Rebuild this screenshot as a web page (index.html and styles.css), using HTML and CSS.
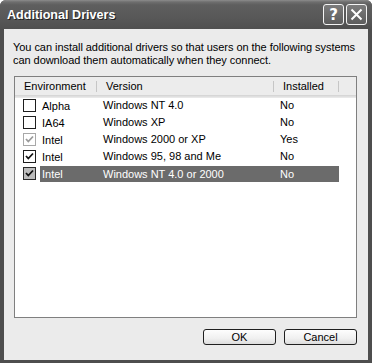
FILE: index.html
```html
<!DOCTYPE html>
<html>
<head>
<meta charset="utf-8">
<link rel="stylesheet" href="styles.css">
</head>
<body>
<div class="window">
  <div class="titlebar">
    <span class="title">Additional Drivers</span>
    <div class="tbuttons">
      <span class="tbtn help">?</span>
      <span class="tbtn close"><svg width="13" height="13" viewBox="0 0 13 13"><path d="M1.5 1.5 L11.5 11.5 M11.5 1.5 L1.5 11.5" stroke="#fff" stroke-width="2" fill="none"/></svg></span>
    </div>
  </div>
  <div class="client">
    <p class="desc">You can install additional drivers so that users on the following systems<br>can download them automatically when they connect.</p>
    <div class="listbox">
      <div class="header">
        <div class="hcell">Environment</div>
        <div class="hcell">Version</div>
        <div class="hcell">Installed</div>
        <div class="hcell last"></div>
      </div>
      <div class="rows">
        <div class="row">
          <div class="cell env"><span class="cb"></span><span class="lbl">Alpha</span></div>
          <div class="cell">Windows NT 4.0</div>
          <div class="cell">No</div>
        </div>
        <div class="row">
          <div class="cell env"><span class="cb"></span><span class="lbl">IA64</span></div>
          <div class="cell">Windows XP</div>
          <div class="cell">No</div>
        </div>
        <div class="row">
          <div class="cell env"><span class="cb disabled"><svg width="11" height="11" viewBox="0 0 11 11"><path d="M2 5 L4.3 7.5 L9 2.5" stroke="#9a9a9a" stroke-width="1.8" fill="none"/></svg></span><span class="lbl">Intel</span></div>
          <div class="cell">Windows 2000 or XP</div>
          <div class="cell">Yes</div>
        </div>
        <div class="row">
          <div class="cell env"><span class="cb"><svg width="11" height="11" viewBox="0 0 11 11"><path d="M2 5 L4.3 7.5 L9 2.5" stroke="#111" stroke-width="1.8" fill="none"/></svg></span><span class="lbl">Intel</span></div>
          <div class="cell">Windows 95, 98 and Me</div>
          <div class="cell">No</div>
        </div>
        <div class="row selected">
          <div class="cell env"><span class="cb sel"><svg width="11" height="11" viewBox="0 0 11 11"><path d="M2 5 L4.3 7.5 L9 2.5" stroke="#111" stroke-width="1.8" fill="none"/></svg></span><span class="lbl hl">Intel</span></div>
          <div class="cell hl">Windows NT 4.0 or 2000</div>
          <div class="cell hl">No</div>
        </div>
      </div>
    </div>
    <div class="buttons">
      <button class="btn">OK</button>
      <button class="btn">Cancel</button>
    </div>
  </div>
</div>
</body>
</html>
```

FILE: styles.css
```css
html, body {
  margin: 0;
  padding: 0;
  background: #fff;
}
.window {
  width: 372px;
  height: 363px;
  box-sizing: border-box;
  background: #4e4e4e;
  display: flex;
  flex-direction: column;
  border-radius: 6px 6px 0 0;
  overflow: hidden;
}
.titlebar {
  height: 29px;
  flex: none;
  display: flex;
  align-items: center;
  justify-content: space-between;
  padding: 0 5px 0 7px;
  background: linear-gradient(#8c8c8c 0, #6e6e6e 2px, #5e5e5e 5px, #585858 60%, #4f4f4f 100%);
}
.title {
  font-family: "Liberation Sans", Arial, sans-serif;
  font-weight: bold;
  font-size: 12.6px;
  color: #fff;
  text-shadow: 1px 1px 0 #222;
  padding-top: 1px;
}
.tbuttons {
  display: flex;
  gap: 2px;
}
.tbtn {
  width: 19px;
  height: 19px;
  border: 1px solid #f4f4f4;
  border-radius: 3px;
  background: linear-gradient(#7c7c7c, #5d5d5d);
  display: flex;
  align-items: center;
  justify-content: center;
  color: #fff;
  font-family: "DejaVu Sans", sans-serif;
  font-weight: bold;
  font-size: 15px;
}
.client {
  flex: 1;
  margin: 0 4px 3px 4px;
  background: #ebebeb;
  display: flex;
  flex-direction: column;
  font-family: "Liberation Sans", Arial, sans-serif;
  font-size: 11px;
  color: #000;
}
.desc {
  margin: 0;
  padding: 12px 0 0 9px;
  line-height: 13px;
  white-space: nowrap;
  letter-spacing: -0.05px;
}
.listbox {
  margin: 9px 0 0 10px;
  width: 343px;
  height: 242px;
  box-sizing: border-box;
  border: 1px solid #7f7f7f;
  background: #fff;
}
.header {
  display: grid;
  grid-template-columns: 82px 177px 65px 1fr;
  height: 18px;
  background: #ececec;
  border-bottom: 1px solid #d6d6d6;
  box-shadow: 0 1px 0 #dfdfdf, 0 2px 0 #e8e8e8;
}
.hcell {
  display: flex;
  align-items: center;
  padding-left: 9px;
  position: relative;
}
.hcell::after {
  content: "";
  position: absolute;
  right: 0;
  top: 4px;
  bottom: 3px;
  width: 1px;
  background: #c6c6c6;
}
.hcell.last::after {
  display: none;
}
.rows {
  padding-top: 1px;
}
.row {
  display: grid;
  grid-template-columns: 82px 177px 65px;
  height: 17px;
  align-items: center;
}
.cell {
  padding-left: 6px;
  height: 17px;
  line-height: 17px;
  white-space: nowrap;
}
.cell.env {
  padding-left: 8px;
  display: flex;
  align-items: center;
}
.cb {
  width: 11px;
  height: 11px;
  border: 1px solid #1e1e1e;
  background: #fff;
  display: inline-flex;
  flex: none;
}
.cb.disabled {
  border-color: #a8a8a8;
}
.cb.sel {
  background: #bdbdbd;
  border-color: #2a2a2a;
}
.lbl {
  margin-left: 4px;
  padding: 0 2px;
  height: 16px;
  line-height: 16px;
  flex: 1;
}
.hl {
  background: #6b6b6b;
  color: #fff;
}
.selected .cell.hl {
  height: 16px;
  line-height: 16px;
}
.selected .cell:last-child {
  width: 59px;
}
.buttons {
  display: flex;
  justify-content: flex-end;
  gap: 8px;
  margin: 11px 11px 0 0;
}
.btn {
  width: 73px;
  height: 16px;
  box-sizing: border-box;
  border: 1px solid #1f1f1f;
  border-radius: 3px;
  background: linear-gradient(#fdfdfd, #f0f0f0 60%, #dcdcdc);
  font-family: "Liberation Sans", Arial, sans-serif;
  font-size: 11px;
  color: #000;
  padding: 0;
  line-height: 14px;
}
```
